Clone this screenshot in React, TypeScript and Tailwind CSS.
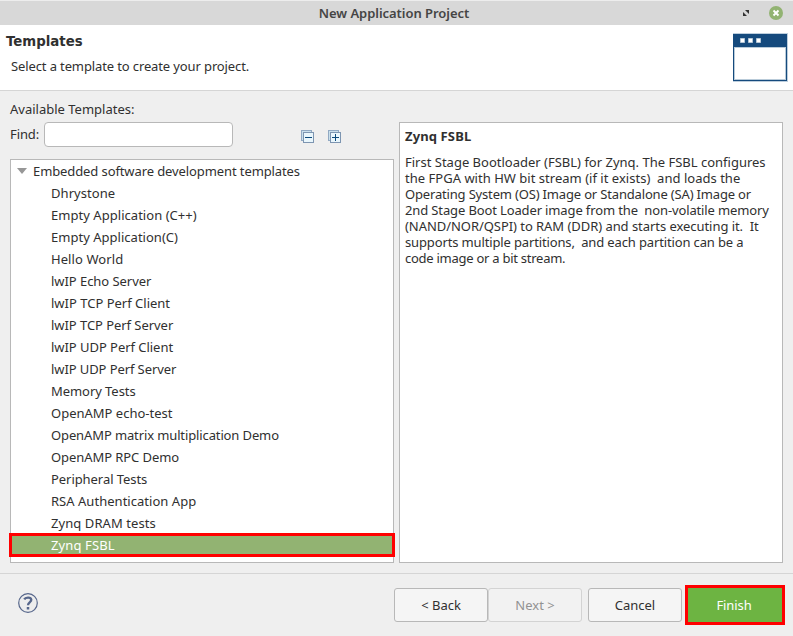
const templates: { name: string; tracking: string }[] = [
  { name: 'Dhrystone', tracking: 'tracking-[0.06px]' },
  { name: 'Empty Application (C++)', tracking: 'tracking-[0.04px]' },
  { name: 'Empty Application(C)', tracking: 'tracking-[0.02px]' },
  { name: 'Hello World', tracking: 'tracking-[0.08px]' },
  { name: 'lwIP Echo Server', tracking: 'tracking-[-0.05px]' },
  { name: 'lwIP TCP Perf Client', tracking: 'tracking-[0px]' },
  { name: 'lwIP TCP Perf Server', tracking: 'tracking-[-0.05px]' },
  { name: 'lwIP UDP Perf Client', tracking: 'tracking-[-0.04px]' },
  { name: 'lwIP UDP Perf Server', tracking: 'tracking-[-0.09px]' },
  { name: 'Memory Tests', tracking: 'tracking-[-0.06px]' },
  { name: 'OpenAMP echo-test', tracking: 'tracking-[0px]' },
  { name: 'OpenAMP matrix multiplication Demo', tracking: 'tracking-[-0.12px]' },
  { name: 'OpenAMP RPC Demo', tracking: 'tracking-[-0.07px]' },
  { name: 'Peripheral Tests', tracking: 'tracking-[-0.06px]' },
  { name: 'RSA Authentication App', tracking: 'tracking-[0.03px]' },
  { name: 'Zynq DRAM tests', tracking: 'tracking-[0.08px]' },
  { name: 'Zynq FSBL', tracking: 'tracking-[0.12px]' },
];

const description: { text: string; tracking: string }[] = [
  { text: 'First Stage Bootloader (FSBL) for Zynq. The FSBL configures', tracking: 'tracking-[0px]' },
  { text: 'the FPGA with HW bit stream (if it exists)  and loads the', tracking: 'tracking-[0.02px]' },
  { text: 'Operating System (OS) Image or Standalone (SA) Image or', tracking: 'tracking-[-0.17px]' },
  { text: '2nd Stage Boot Loader image from the  non-volatile memory', tracking: 'tracking-[-0.13px]' },
  { text: '(NAND/NOR/QSPI) to RAM (DDR) and starts executing it.  It', tracking: 'tracking-[-0.05px]' },
  { text: 'supports multiple partitions,  and each partition can be a', tracking: 'tracking-[-0.14px]' },
  { text: 'code image or a bit stream.', tracking: 'tracking-[-0.26px]' },
];

function TreeButton({ expand }: { expand?: boolean }) {
  return (
    <button className="block h-[13px] w-[13px]" aria-label={expand ? 'Expand all' : 'Collapse all'}>
      <svg width="13" height="13" viewBox="0 0 13 13" shapeRendering="crispEdges">
        <rect x="0.5" y="0.5" width="10" height="10" fill="#c9dfeb" stroke="#91a9c3" />
        <rect x="2.5" y="2.5" width="10" height="10" fill="#e9f6fc" stroke="#7d95b1" />
        <path d="M4 7.5h7" stroke="#0c4a7c" />
        {expand && <path d="M7.5 4v7" stroke="#0c4a7c" />}
      </svg>
    </button>
  );
}

export default function App() {
  return (
    <div className="flex h-[636px] w-[793px] flex-col overflow-hidden bg-[#efefef] font-['Noto_Sans',sans-serif] text-[13px] text-[#303030]">
      <header className="grid h-[25px] shrink-0 grid-cols-[1fr_auto_1fr] items-center border-t border-[#ededed] bg-[#d8d8d8]">
        <span />
        <h1 className="pr-[5px] text-[13px] font-semibold leading-[24px] tracking-[-0.04px] text-[#454545]">New Application Project</h1>
        <div className="flex items-center justify-end gap-[20px] pr-[10px]">
          <svg width="6" height="6" viewBox="0 0 6 6" fill="#333333">
            <path d="M2 0h4v4zM0 2v4h4z" />
          </svg>
          <svg className="-mt-px" width="14" height="14" viewBox="0 0 14 14">
            <circle cx="7" cy="7" r="7" fill="#92b372" />
            <path d="M4.500 4.500l5 5M9.500 4.500l-5 5" stroke="#ffffff" strokeWidth="1.9" />
          </svg>
        </div>
      </header>

      <section className="flex h-[66px] shrink-0 justify-between border-b border-[#d5d5d5] bg-white pl-[6px] pr-[5px]">
        <div>
          <h2 className="pt-[8px] font-['DejaVu_Sans',sans-serif] text-[13.33px] font-bold leading-[18px]">Templates</h2>
          <p className="pl-[5px] pt-[6px] leading-[18px] tracking-[-0.12px]">Select a template to create your project.</p>
        </div>
        <svg className="mt-[8px]" width="55" height="49" viewBox="0 0 55 49">
          <rect width="55" height="49" fill="#bdcedd" />
          <rect y="1" width="54" height="47" fill="#154a7d" />
          <rect x="1" y="14" width="52" height="33" fill="#b9cbd9" />
          <rect x="2" y="15" width="50" height="31" fill="#ffffff" />
          <path d="M7.500 5.500h4v4h-4zM15.500 5.500h4v4h-4zM23.500 5.500h4v4h-4z" fill="#ffffff" stroke="#b4c6d6" strokeWidth="1" />
        </svg>
      </section>

      <main className="grid h-[472px] shrink-0 grid-cols-[384px_384px] gap-[5px] pl-[10px]">
        <div className="flex flex-col">
          <p className="pt-[9px] leading-[18px]">Available Templates:</p>
          <div className="mt-[4px] flex h-[25px] items-center">
            <label className="w-[34px] shrink-0 tracking-[-0.1px]">Find:</label>
            <input className="h-[25px] w-[189px] rounded-[4px] border border-[#b8b8b8] bg-white" />
            <div className="ml-[68px] mt-[4px] flex gap-[14px]">
              <TreeButton />
              <TreeButton expand />
            </div>
          </div>
          <div className="mt-[12px] h-[404px] border border-[#b8b8b8] bg-white">
            <div className="flex h-[22px] items-center pl-[6px]">
              <svg width="10" height="6" viewBox="0 0 10 6">
                <path d="M0 0h10l-5 6z" fill="#979797" />
              </svg>
              <span className="pl-[6px] leading-[22px] tracking-[-0.1px]">Embedded software development templates</span>
            </div>
            <ul>
              {templates.map((item, index) => (
                <li
                  key={item.name}
                  className={
                    index === templates.length - 1
                      ? 'relative -mx-[2px] -mt-[1px] h-[24px] border-[3px] border-[#ff0000] bg-[#92b372] pl-[39px] leading-[18px] text-white'
                      : 'h-[22px] pl-[40px] leading-[22px]'
                  }
                >
                  <span className={item.tracking}>{item.name}</span>
                </li>
              ))}
            </ul>
          </div>
        </div>
        <article className="mt-[31px] h-[441px] border border-[#b8b8b8] bg-white pl-[5px]">
          <h3 className="pt-[5px] font-bold leading-[16px] tracking-[0.12px]">Zynq FSBL</h3>
          <div className="mt-[10px]">
            {description.map((line) => (
              <p key={line.text} className="whitespace-pre leading-[16px]">
                <span className={line.tracking}>{line.text}</span>
              </p>
            ))}
          </div>
        </article>
      </main>

      <footer className="mt-[10px] flex h-[63px] items-center border-t border-[#d5d5d5] pl-[18px] pr-[8px]">
        <svg className="mb-[4px]" width="20" height="20" viewBox="0 0 20 20" fill="none" stroke="#56668b">
          <circle cx="10" cy="10" r="9.300" fill="#ededed" strokeWidth="1.2" />
          <path d="M6.200 6.400C7.300 4.500 12.800 3.600 13.300 6.700C13.600 9 10 9.100 10 12.300" strokeWidth="2.300" />
          <path d="M10 14v2.500" strokeWidth="2.500" />
        </svg>
        <div className="ml-auto flex items-center">
          <button className="h-[34px] w-[94px] rounded-[3px] border border-[#b8b8b8] bg-[#f5f5f5] pt-[2px]">&lt; Back</button>
          <button className="h-[34px] w-[94px] rounded-[3px] border border-[#d3d3d3] bg-[#f2f2f2] pt-[2px] text-[#929292]">Next &gt;</button>
          <button className="ml-[6px] h-[34px] w-[94px] rounded-[3px] border border-[#b8b8b8] bg-[#f5f5f5] pt-[2px]">Cancel</button>
          <button className="ml-[3px] h-[40px] w-[100px] border-[3px] border-[#ff0000] bg-[#6db442] pr-[2px] pt-[2px] tracking-[-0.1px] text-white">Finish</button>
        </div>
      </footer>
    </div>
  );
}
